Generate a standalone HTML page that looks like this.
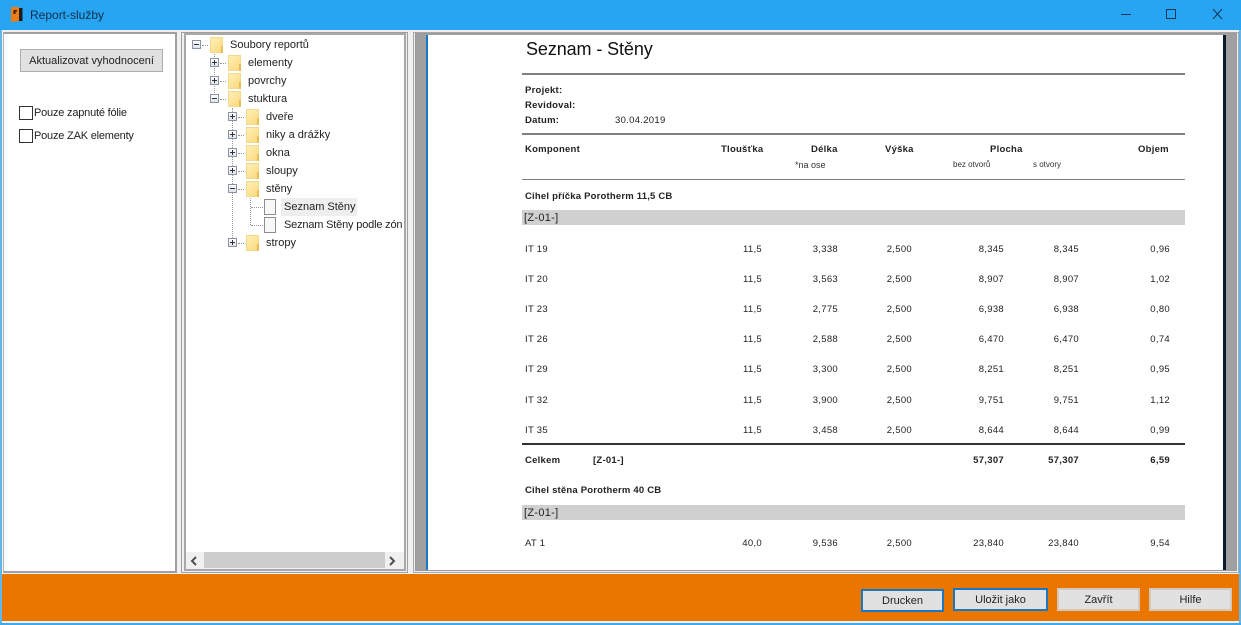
<!DOCTYPE html>
<html><head><meta charset="utf-8"><style>
html,body{margin:0;padding:0;width:1241px;height:625px;overflow:hidden;background:#f0f0f0}
body{position:relative;font-family:"Liberation Sans",sans-serif;color:#111}
div,span,svg{position:absolute;box-sizing:border-box}
.t{white-space:nowrap;line-height:14px;height:14px}
.u{font-size:11px;color:#222}
.c{letter-spacing:-.2px}
.b{font-size:9.5px;font-weight:bold;color:#222;letter-spacing:.25px;margin-top:1px}
.n{margin-top:0}
.r{font-size:9.5px;color:#222;letter-spacing:.3px;text-align:right;width:80px;margin-top:1px}
.rb{font-weight:bold}
.l{left:525px;font-size:9.5px;color:#222;letter-spacing:.3px;margin-top:1px}
.f{width:13px;height:16px;margin-top:1px;background:linear-gradient(135deg,#fff0b8,#fbd97c);border:1px solid #f3d88e}
.f:after{content:"";position:absolute;right:-1px;bottom:-1px;width:2px;height:7px;background:#e8bd55}
.x{width:9px;height:9px;border:1px solid #8a94a6;background:linear-gradient(#fff,#dfe3ea)}
.x:before{content:"";position:absolute;left:1px;top:3px;width:5px;height:1px;background:#333}
.p:after{content:"";position:absolute;left:3px;top:1px;width:1px;height:5px;background:#333}
.h{height:0;border-top:1px dotted #999}
.v{width:0;border-left:1px dotted #999}
.g{left:522px;width:663px;height:15px;background:#d0d0d0;font-size:11px;line-height:17px;color:#222;padding-left:2px;letter-spacing:.3px}
.btn{height:23px;background:#e1e1e1;border:2px solid #d2c8bd;font-size:11px;text-align:center;line-height:20px;color:#222}
.sel{border-color:#1976c0}
.cb{width:14px;height:14px;border:1px solid #333;background:#fff;left:19px}
.doc{left:264px;width:12px;height:16px;background:#f8f8f8;border:1px solid #8d8d8d}
</style></head><body>
<!-- title bar -->
<div style="left:0;top:0;width:1241px;height:30px;background:#27a4f2"></div>
<svg style="left:10px;top:6px" width="14" height="17" viewBox="0 0 14 17"><path d="M1 1H9V15L1 16Z" fill="#ee7d11"/><path d="M9 2H12.5V15H9Z" fill="#1e1c1c"/><path d="M3.5 4H7V5.5H5.5V8H3.5Z" fill="#3a1c00"/></svg>
<div class="t" style="left:30px;top:8px;font-size:12px;color:#10304a">Report-služby</div>
<svg style="left:1115px;top:6px" width="118" height="18" viewBox="0 0 118 18" fill="none" stroke="#16365a" stroke-width="1"><path d="M6 8.5H16"/><rect x="51.5" y="3.5" width="9" height="9"/><path d="M98 3L107 13M107 3L98 13"/></svg>
<!-- left frame -->
<div style="left:0;top:30px;width:1241px;height:595px;background:#f0f0f0;border-left:2px solid #5fb7ee;border-right:2px solid #5fb7ee"></div>
<!-- left panel -->
<div style="left:3px;top:32px;width:174px;height:541px;background:#fff;border:2px solid #a0a0a0;border-left:1px solid #b4b4b4"></div>
<div class="btn" style="left:20px;top:49px;width:143px;border:1px solid #adadad;line-height:22px">Aktualizovat vyhodnocení</div>
<div class="cb" style="top:106px"></div>
<div class="t u c" style="left:34px;top:106px">Pouze zapnuté fólie</div>
<div class="cb" style="top:129px"></div>
<div class="t u c" style="left:34px;top:129px">Pouze ZAK elementy</div>
<!-- tree panel -->
<div style="left:181px;top:32px;width:227px;height:541px;border:1px solid #a0a0a0"></div>
<div style="left:184px;top:33px;width:222px;height:538px;background:#fff;border:2px solid #a8a8a8"></div>
<div class="v" style="left:214px;top:54px;height:45px"></div>
<div class="v" style="left:232px;top:108px;height:136px"></div>
<div class="v" style="left:250px;top:198px;height:27px"></div>
<div class="x" style="left:192px;top:40px"></div><div class="h" style="left:202px;top:45px;width:6px"></div>
<div class="f" style="left:210px;top:36px"></div><div class="t u" style="left:230px;top:38px">Soubory reportů</div>
<div class="x p" style="left:210px;top:58px"></div><div class="h" style="left:220px;top:63px;width:6px"></div>
<div class="f" style="left:228px;top:54px"></div><div class="t u" style="left:248px;top:56px">elementy</div>
<div class="x p" style="left:210px;top:76px"></div><div class="h" style="left:220px;top:81px;width:6px"></div>
<div class="f" style="left:228px;top:72px"></div><div class="t u" style="left:248px;top:74px">povrchy</div>
<div class="x" style="left:210px;top:94px"></div><div class="h" style="left:220px;top:99px;width:6px"></div>
<div class="f" style="left:228px;top:90px"></div><div class="t u" style="left:248px;top:92px">stuktura</div>
<div class="x p" style="left:228px;top:112px"></div><div class="h" style="left:238px;top:117px;width:6px"></div>
<div class="f" style="left:246px;top:108px"></div><div class="t u" style="left:266px;top:110px">dveře</div>
<div class="x p" style="left:228px;top:130px"></div><div class="h" style="left:238px;top:135px;width:6px"></div>
<div class="f" style="left:246px;top:126px"></div><div class="t u" style="left:266px;top:128px">niky a drážky</div>
<div class="x p" style="left:228px;top:148px"></div><div class="h" style="left:238px;top:153px;width:6px"></div>
<div class="f" style="left:246px;top:144px"></div><div class="t u" style="left:266px;top:146px">okna</div>
<div class="x p" style="left:228px;top:166px"></div><div class="h" style="left:238px;top:171px;width:6px"></div>
<div class="f" style="left:246px;top:162px"></div><div class="t u" style="left:266px;top:164px">sloupy</div>
<div class="x" style="left:228px;top:184px"></div><div class="h" style="left:238px;top:189px;width:6px"></div>
<div class="f" style="left:246px;top:180px"></div><div class="t u" style="left:266px;top:182px">stěny</div>
<div class="h" style="left:251px;top:207px;width:12px"></div>
<div class="doc" style="top:199px"></div>
<div style="left:281px;top:198px;width:76px;height:18px;background:#eeeeee"></div>
<div class="t u" style="left:284px;top:200px">Seznam Stěny</div>
<div class="h" style="left:251px;top:225px;width:12px"></div>
<div class="doc" style="top:217px"></div>
<div class="t u" style="left:284px;top:218px;letter-spacing:-.18px">Seznam Stěny podle zón</div>
<div class="x p" style="left:228px;top:238px"></div><div class="h" style="left:238px;top:243px;width:6px"></div>
<div class="f" style="left:246px;top:234px"></div><div class="t u" style="left:266px;top:236px">stropy</div>
<!-- tree scrollbar -->
<div style="left:186px;top:552px;width:218px;height:17px;background:#f0f0f0"></div>
<div style="left:204px;top:552px;width:181px;height:16px;background:#cdcdcd"></div>
<svg style="left:186px;top:552px" width="218" height="17" viewBox="0 0 218 17" fill="none" stroke="#505050" stroke-width="2"><path d="M10 5L6 9L10 13M204 5L208 9L204 13"/></svg>
<!-- report panel -->
<div style="left:413px;top:32px;width:826px;height:541px;border:1px solid #a8a8a8"></div>
<div style="left:415px;top:33px;width:822px;height:538px;background:#a0a0a0;border:1px solid #9a9a9a"></div>
<div style="left:426px;top:35px;width:797px;height:535px;background:#fff;border-left:2px solid #1a78c8"></div>
<div style="left:1223px;top:35px;width:3px;height:535px;background:#0a1a2a"></div>
<!-- report content -->
<div class="t" style="left:526px;top:38px;height:22px;line-height:22px;font-size:18px;color:#111;letter-spacing:-.1px">Seznam - Stěny</div>
<div style="left:522px;top:73px;width:663px;height:2px;background:#808080"></div>
<div class="t b" style="left:525px;top:83px">Projekt:</div>
<div class="t b" style="left:525px;top:98px">Revidoval:</div>
<div class="t b" style="left:525px;top:113px">Datum:</div>
<div class="t l" style="left:615px;top:113px">30.04.2019</div>
<div style="left:522px;top:133px;width:663px;height:2px;background:#808080"></div>
<div class="t b n" style="left:525px;top:143px">Komponent</div>
<div class="t b n" style="left:721px;top:143px">Tloušťka</div>
<div class="t b n" style="left:811px;top:143px">Délka</div>
<div class="t b n" style="left:885px;top:143px">Výška</div>
<div class="t b n" style="left:990px;top:143px">Plocha</div>
<div class="t b n" style="left:1138px;top:143px">Objem</div>
<div class="t" style="left:795px;top:158px;font-size:9px;color:#333">*na ose</div>
<div class="t" style="left:953px;top:158px;font-size:8px;color:#333">bez otvorů</div>
<div class="t" style="left:1033px;top:158px;font-size:8px;color:#333">s otvory</div>
<div style="left:522px;top:179px;width:663px;height:1px;background:#808080"></div>
<div class="t b" style="left:525px;top:189px;letter-spacing:.2px">Cihel příčka Porotherm 11,5 CB</div>
<div class="g" style="top:210px">[Z-01-]</div>

<div class="t l" style="top:242px">IT 19</div><div class="t r" style="left:682px;top:242px">11,5</div><div class="t r" style="left:758px;top:242px">3,338</div><div class="t r" style="left:832px;top:242px">2,500</div><div class="t r" style="left:924px;top:242px">8,345</div><div class="t r" style="left:999px;top:242px">8,345</div><div class="t r" style="left:1090px;top:242px">0,96</div>
<div class="t l" style="top:272px">IT 20</div><div class="t r" style="left:682px;top:272px">11,5</div><div class="t r" style="left:758px;top:272px">3,563</div><div class="t r" style="left:832px;top:272px">2,500</div><div class="t r" style="left:924px;top:272px">8,907</div><div class="t r" style="left:999px;top:272px">8,907</div><div class="t r" style="left:1090px;top:272px">1,02</div>
<div class="t l" style="top:302px">IT 23</div><div class="t r" style="left:682px;top:302px">11,5</div><div class="t r" style="left:758px;top:302px">2,775</div><div class="t r" style="left:832px;top:302px">2,500</div><div class="t r" style="left:924px;top:302px">6,938</div><div class="t r" style="left:999px;top:302px">6,938</div><div class="t r" style="left:1090px;top:302px">0,80</div>
<div class="t l" style="top:332px">IT 26</div><div class="t r" style="left:682px;top:332px">11,5</div><div class="t r" style="left:758px;top:332px">2,588</div><div class="t r" style="left:832px;top:332px">2,500</div><div class="t r" style="left:924px;top:332px">6,470</div><div class="t r" style="left:999px;top:332px">6,470</div><div class="t r" style="left:1090px;top:332px">0,74</div>
<div class="t l" style="top:362px">IT 29</div><div class="t r" style="left:682px;top:362px">11,5</div><div class="t r" style="left:758px;top:362px">3,300</div><div class="t r" style="left:832px;top:362px">2,500</div><div class="t r" style="left:924px;top:362px">8,251</div><div class="t r" style="left:999px;top:362px">8,251</div><div class="t r" style="left:1090px;top:362px">0,95</div>
<div class="t l" style="top:393px">IT 32</div><div class="t r" style="left:682px;top:393px">11,5</div><div class="t r" style="left:758px;top:393px">3,900</div><div class="t r" style="left:832px;top:393px">2,500</div><div class="t r" style="left:924px;top:393px">9,751</div><div class="t r" style="left:999px;top:393px">9,751</div><div class="t r" style="left:1090px;top:393px">1,12</div>
<div class="t l" style="top:423px">IT 35</div><div class="t r" style="left:682px;top:423px">11,5</div><div class="t r" style="left:758px;top:423px">3,458</div><div class="t r" style="left:832px;top:423px">2,500</div><div class="t r" style="left:924px;top:423px">8,644</div><div class="t r" style="left:999px;top:423px">8,644</div><div class="t r" style="left:1090px;top:423px">0,99</div>

<div style="left:522px;top:443px;width:663px;height:2px;background:#333"></div>
<div class="t b" style="left:525px;top:453px">Celkem</div>
<div class="t b" style="left:593px;top:453px">[Z-01-]</div>
<div class="t r rb" style="left:924px;top:453px">57,307</div><div class="t r rb" style="left:999px;top:453px">57,307</div><div class="t r rb" style="left:1090px;top:453px">6,59</div>
<div class="t b" style="left:525px;top:483px;letter-spacing:.2px">Cihel stěna Porotherm 40 CB</div>
<div class="g" style="top:505px">[Z-01-]</div>
<div class="t l" style="top:536px">AT 1</div><div class="t r" style="left:682px;top:536px">40,0</div><div class="t r" style="left:758px;top:536px">9,536</div><div class="t r" style="left:832px;top:536px">2,500</div><div class="t r" style="left:924px;top:536px">23,840</div><div class="t r" style="left:999px;top:536px">23,840</div><div class="t r" style="left:1090px;top:536px">9,54</div>
<!-- bottom bar -->
<div style="left:2px;top:574px;width:1237px;height:47px;background:#ea7600"></div>
<div style="left:0;top:623px;width:1241px;height:2px;background:#3aa9ee"></div>
<div class="btn sel" style="left:861px;top:589px;width:83px">Drucken</div>
<div class="btn sel" style="left:953px;top:588px;width:95px">Uložit jako</div>
<div class="btn" style="left:1057px;top:588px;width:83px">Zavřít</div>
<div class="btn" style="left:1149px;top:588px;width:83px">Hilfe</div>
</body></html>
